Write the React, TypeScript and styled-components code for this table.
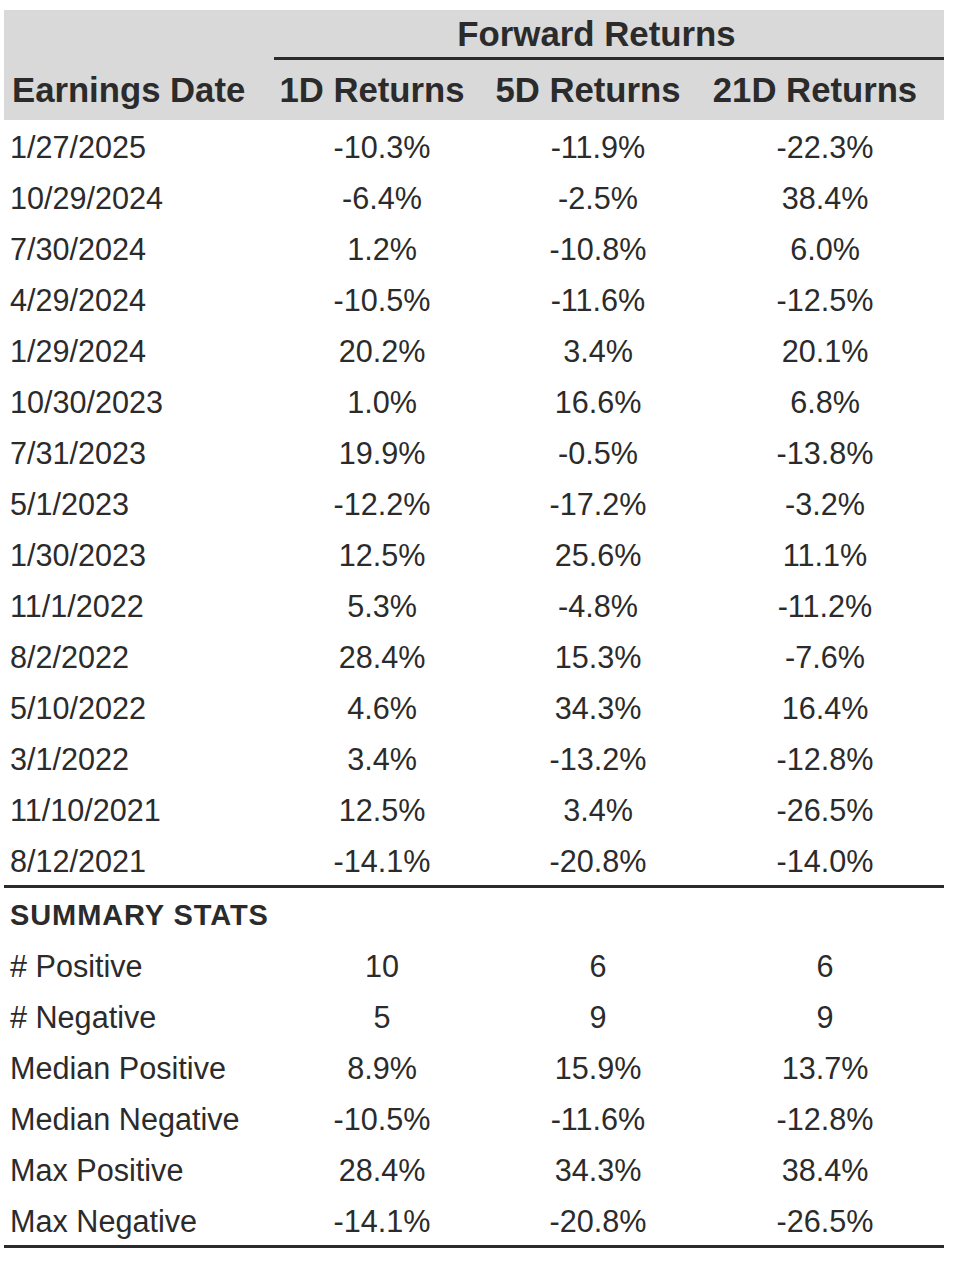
import React from "react";
import styled, { createGlobalStyle } from "styled-components";

const Global = createGlobalStyle`
  html, body { margin: 0; padding: 0; background: #ffffff; }
  body { font-family: "Liberation Sans", Arial, Helvetica, sans-serif; color: #2b2b2b; }
`;

const COLS = "270px 216px 216px 238px";

const Page = styled.div`
  padding: 10px 0 0 4px;
`;

const Table = styled.div`
  width: 940px;
  display: flex;
  flex-direction: column;
`;

const HeadBand = styled.div`
  background: #d9d9d9;
  display: flex;
  flex-direction: column;
`;

const GroupRow = styled.div`
  display: grid;
  grid-template-columns: ${COLS};
  height: 47px;
`;

const GroupTitle = styled.div`
  grid-column: 2 / 5;
  display: flex;
  align-items: center;
  justify-content: center;
  padding-right: 25px;
  font-size: 34.8px;
  font-weight: 700;
`;

const GroupRuleRow = styled.div`
  display: grid;
  grid-template-columns: ${COLS};
  height: 3px;
`;

const GroupRule = styled.div`
  grid-column: 2 / 5;
  background: #2b2b2b;
`;

const HeaderRow = styled.div`
  display: grid;
  grid-template-columns: ${COLS};
  height: 60px;
  align-items: center;
`;

const HeadCell = styled.div<{ $left?: boolean }>`
  font-size: 34.7px;
  font-weight: 700;
  white-space: nowrap;
  text-align: ${(p) => (p.$left ? "left" : "center")};
  padding: ${(p) => (p.$left ? "0 0 0 8px" : "0 20px 0 0")};
`;

const Row = styled.div`
  display: grid;
  grid-template-columns: ${COLS};
  height: 51px;
  align-items: center;
  padding-top: 4px;
  box-sizing: border-box;
`;

const Cell = styled.div<{ $left?: boolean }>`
  font-size: 30.6px;
  white-space: nowrap;
  text-align: ${(p) => (p.$left ? "left" : "center")};
  padding-left: ${(p) => (p.$left ? "6px" : "0")};
`;

const Rule = styled.div`
  height: 3px;
  background: #2b2b2b;
`;

const SectionTitle = styled.div`
  height: 51px;
  display: flex;
  align-items: center;
  padding: 4px 0 0 6px;
  box-sizing: border-box;
  font-size: 29px;
  font-weight: 700;
  letter-spacing: 0.9px;
`;

const earnings: string[][] = [
  ["1/27/2025", "-10.3%", "-11.9%", "-22.3%"],
  ["10/29/2024", "-6.4%", "-2.5%", "38.4%"],
  ["7/30/2024", "1.2%", "-10.8%", "6.0%"],
  ["4/29/2024", "-10.5%", "-11.6%", "-12.5%"],
  ["1/29/2024", "20.2%", "3.4%", "20.1%"],
  ["10/30/2023", "1.0%", "16.6%", "6.8%"],
  ["7/31/2023", "19.9%", "-0.5%", "-13.8%"],
  ["5/1/2023", "-12.2%", "-17.2%", "-3.2%"],
  ["1/30/2023", "12.5%", "25.6%", "11.1%"],
  ["11/1/2022", "5.3%", "-4.8%", "-11.2%"],
  ["8/2/2022", "28.4%", "15.3%", "-7.6%"],
  ["5/10/2022", "4.6%", "34.3%", "16.4%"],
  ["3/1/2022", "3.4%", "-13.2%", "-12.8%"],
  ["11/10/2021", "12.5%", "3.4%", "-26.5%"],
  ["8/12/2021", "-14.1%", "-20.8%", "-14.0%"],
];

const summary: string[][] = [
  ["# Positive", "10", "6", "6"],
  ["# Negative", "5", "9", "9"],
  ["Median Positive", "8.9%", "15.9%", "13.7%"],
  ["Median Negative", "-10.5%", "-11.6%", "-12.8%"],
  ["Max Positive", "28.4%", "34.3%", "38.4%"],
  ["Max Negative", "-14.1%", "-20.8%", "-26.5%"],
];

const DataRow = ({ cells }: { cells: string[] }) => (
  <Row>
    {cells.map((c, i) => (
      <Cell key={i} $left={i === 0}>
        {c}
      </Cell>
    ))}
  </Row>
);

export default function App() {
  return (
    <Page>
      <Global />
      <Table>
        <HeadBand>
          <GroupRow>
            <GroupTitle>Forward Returns</GroupTitle>
          </GroupRow>
          <GroupRuleRow>
            <GroupRule />
          </GroupRuleRow>
          <HeaderRow>
            <HeadCell $left>Earnings Date</HeadCell>
            <HeadCell>1D Returns</HeadCell>
            <HeadCell>5D Returns</HeadCell>
            <HeadCell>21D Returns</HeadCell>
          </HeaderRow>
        </HeadBand>
        {earnings.map((r) => (
          <DataRow key={r[0]} cells={r} />
        ))}
        <Rule />
        <SectionTitle>SUMMARY STATS</SectionTitle>
        {summary.map((r) => (
          <DataRow key={r[0]} cells={r} />
        ))}
        <Rule />
      </Table>
    </Page>
  );
}
